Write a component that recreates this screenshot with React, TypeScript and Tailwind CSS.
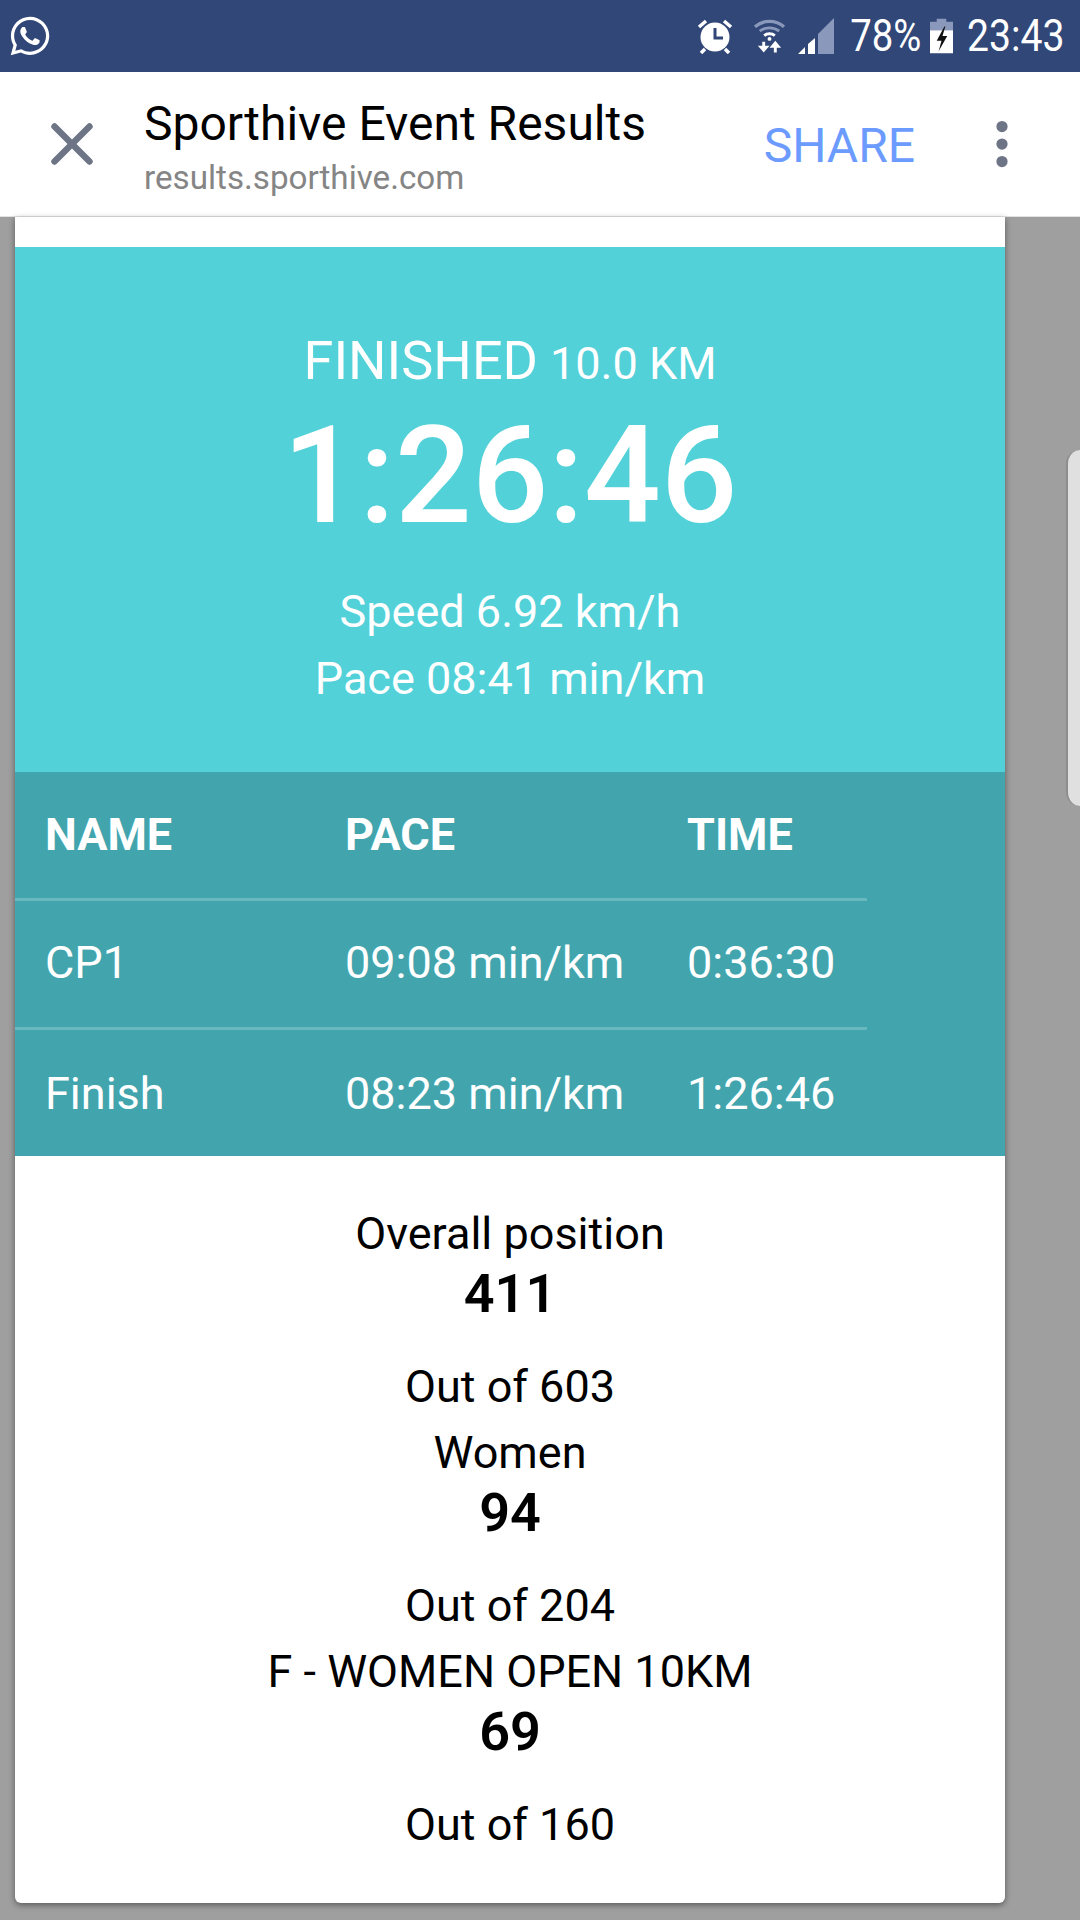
import { MoreVertical, X } from "lucide-react";
import { FaWhatsapp } from "react-icons/fa";

const rows = [
  { name: "CP1", pace: "09:08 min/km", time: "0:36:30" },
  { name: "Finish", pace: "08:23 min/km", time: "1:26:46" },
];

const positions = [
  { label: "Overall position", value: "411", total: "Out of 603" },
  { label: "Women", value: "94", total: "Out of 204" },
  { label: "F - WOMEN OPEN 10KM", value: "69", total: "Out of 160" },
];

function AlarmIcon() {
  return (
    <svg viewBox="0 0 36 36" className="h-[36px] w-[36px]">
      <circle cx="18" cy="19" r="14.500" fill="white" />
      <path d="M18 10v10h8" stroke="#314777" strokeWidth="3" fill="none" />
      <path d="M2 9l7-6M34 9l-7-6M8 31l-4 4M28 31l4 4" stroke="white" strokeWidth="3.500" />
    </svg>
  );
}

function WifiIcon() {
  return (
    <svg viewBox="0 0 32 36" className="h-[36px] w-[31px]" fill="none">
      <path d="M1 8.500C9.500 1 22.500 1 31 8.500" stroke="#8a99bb" strokeWidth="3.500" />
      <path d="M6 13c5.500-4.500 14.500-4.500 20 0" stroke="#8a99bb" strokeWidth="3" />
      <path d="M10.500 17.500c3-2.500 8-2.500 11 0" stroke="white" strokeWidth="3" />
      <circle cx="16" cy="21" r="2" fill="white" />
      <path d="M10 24v6M22 35v-7" stroke="white" strokeWidth="3" />
      <path d="M4 28h12l-6 7zM16 30h12l-6-7z" fill="white" />
    </svg>
  );
}

function SignalIcon() {
  return (
    <svg viewBox="0 0 36 36" className="h-[36px] w-[36px]">
      <path d="M0 36l7-7v7z" fill="white" />
      <path d="M10 26l7-6v16h-7z" fill="white" />
      <path d="M20 16L36 0v36H20z" fill="#8a99bb" />
    </svg>
  );
}

function BatteryIcon() {
  return (
    <svg viewBox="0 0 24 36" className="h-[36px] w-[23px]">
      <path d="M7 0h10v3h7v9H0V3h7z" fill="#8a99bb" />
      <path d="M0 12h24v24H0z" fill="white" />
      <path d="M15 8l-8 15h5l-3 11 9-16h-5l3-10z" fill="#111" />
    </svg>
  );
}

export default function App() {
  return (
    <div className="relative flex h-[1920px] w-[1080px] flex-col overflow-hidden bg-[#9f9f9f] font-['Roboto',sans-serif]">
      {/* Status bar */}
      <div className="flex h-[72px] shrink-0 items-center justify-between bg-[#314777] pl-[9px] pr-[17px] text-white">
        <FaWhatsapp className="h-[44px] w-[42px]" />
        <div className="flex items-center">
          <AlarmIcon />
          <div className="ml-[21px]">
            <WifiIcon />
          </div>
          <div className="ml-[13px]">
            <SignalIcon />
          </div>
          <div className="ml-[17px] flex w-[69px] justify-center">
            <span className="scale-x-[0.87] text-[44px] leading-none">78%</span>
          </div>
          <div className="ml-[10px]">
            <BatteryIcon />
          </div>
          <div className="ml-[15px] flex w-[95px] justify-center">
            <span className="scale-x-[0.89] text-[44px] leading-none">23:43</span>
          </div>
        </div>
      </div>

      {/* Custom tab toolbar */}
      <div className="flex h-[145px] shrink-0 items-center border-b border-[#e2e2e2] bg-white">
        <X className="ml-[37px] h-[70px] w-[70px] text-[#6d7486]" strokeWidth={2.200} />
        <div className="ml-[37px] flex flex-1 flex-col pt-[6px]">
          <span className="text-[48px] leading-[52px] text-black">Sporthive Event Results</span>
          <span className="mt-[9px] text-[33.200px] leading-[38px] text-[#858585]">results.sporthive.com</span>
        </div>
        <span className="pt-[3px] text-[48px] leading-none text-[#6b9bff]">SHARE</span>
        <MoreVertical className="ml-[57px] mr-[48px] h-[60px] w-[60px] fill-[#6d7486] text-[#6d7486]" strokeWidth={2.500} />
      </div>

      {/* Result card */}
      <div className="ml-[15px] flex h-[1686px] w-[990px] flex-col rounded-b-[6px] bg-white pt-[30px] shadow-[0_2px_6px_rgba(0,0,0,0.45)]">
        <div className="flex h-[525px] flex-col items-center bg-[#52d1d9] pt-[85px] text-white">
          <div className="flex items-baseline text-[54px] leading-[58px]">
            FINISHED<span className="ml-[12px] text-[45px]">10.0 KM</span>
          </div>
          <div className="mt-[3px] text-[135px] font-medium leading-[160px]">1:26:46</div>
          <div className="mt-[22px] text-[45px] leading-[67px]">Speed 6.92 km/h</div>
          <div className="text-[45px] leading-[67px]">Pace 08:41 min/km</div>
        </div>

        <div className="h-[384px] bg-[#42a5ae] text-white">
          <div className="w-[852px]">
            <div className="grid h-[129px] grid-cols-[300px_342px_1fr] items-center border-b-[3px] border-[#6ab8bf] pl-[30px] text-[45px] font-bold">
              <span>NAME</span>
              <span>PACE</span>
              <span>TIME</span>
            </div>
            {rows.map((row, i) => (
              <div
                key={row.name}
                className={`grid h-[129px] grid-cols-[300px_342px_1fr] items-center pb-[2px] pl-[30px] text-[45px] ${
                  i === 0 ? "border-b-[3px] border-[#6ab8bf]" : ""
                }`}
              >
                <span>{row.name}</span>
                <span>{row.pace}</span>
                <span>{row.time}</span>
              </div>
            ))}
          </div>
        </div>

        <div className="flex flex-col items-center pt-[48px] text-black">
          {positions.map((p) => (
            <div key={p.label} className="flex h-[219px] flex-col items-center text-[45px]">
              <span className="leading-[60px]">{p.label}</span>
              <span className="text-[54px] font-semibold leading-[60px]">{p.value}</span>
              <span className="mt-[33px] leading-[60px]">{p.total}</span>
            </div>
          ))}
        </div>
      </div>

      {/* Edge panel handle */}
      <div className="absolute left-[1066px] top-[450px] h-[356px] w-[20px] rounded-l-[14px] border-l-2 border-[#8d8d8d] bg-[#e0e0e0]" />
    </div>
  );
}
